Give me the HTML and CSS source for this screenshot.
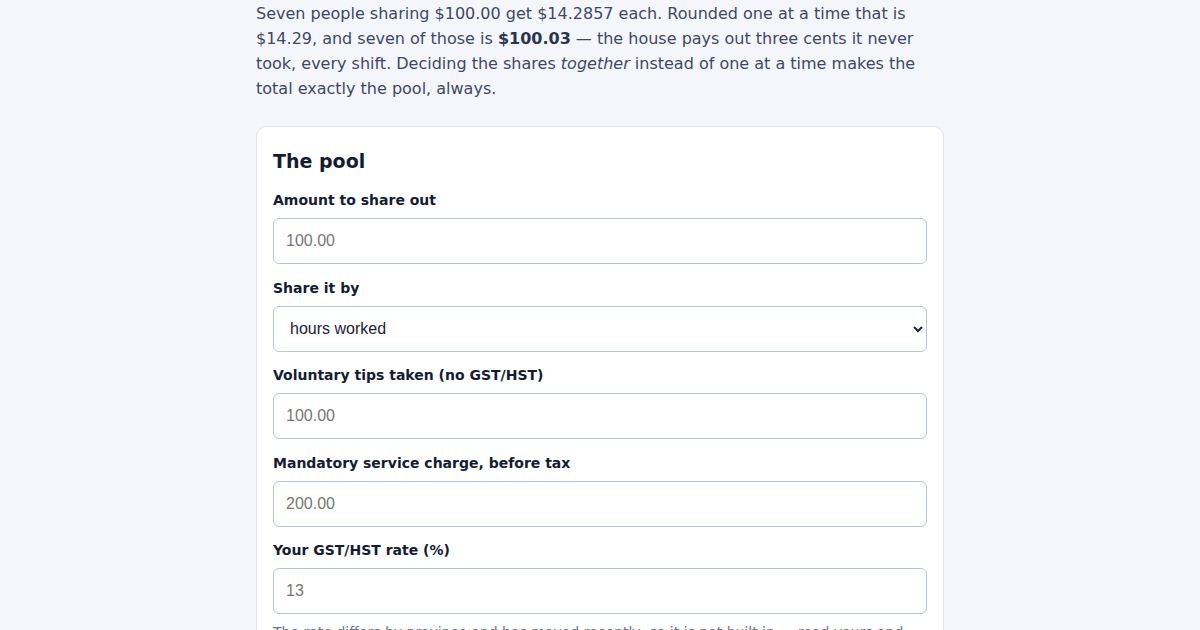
FILE: index.html
```html
<!DOCTYPE html>
<html lang="en">

<head>
    <meta charset="UTF-8" />
    <title>Tip pool</title>
    <link rel="stylesheet" href="styles.css">
</head>

<body>
    <div class="page">
        <p class="intro">Seven people sharing $100.00 get $14.2857 each. Rounded one at a time that is
            $14.29, and seven of those is <strong>$100.03</strong> — the house pays out three cents it never
            took, every shift. Deciding the shares <em>together</em> instead of one at a time makes the
            total exactly the pool, always.</p>

        <div class="card">
            <h2>The pool</h2>
            <div class="field">
                <label for="amount">Amount to share out</label>
                <input type="text" id="amount" placeholder="100.00" />
            </div>
            <div class="field">
                <label for="by">Share it by</label>
                <select id="by">
                    <option>hours worked</option>
                    <option>equal shares</option>
                    <option>points</option>
                </select>
            </div>
            <div class="field">
                <label for="tips">Voluntary tips taken (no GST/HST)</label>
                <input type="text" id="tips" placeholder="100.00" />
            </div>
            <div class="field">
                <label for="charge">Mandatory service charge, before tax</label>
                <input type="text" id="charge" placeholder="200.00" />
            </div>
            <div class="field">
                <label for="rate">Your GST/HST rate (%)</label>
                <input type="text" id="rate" placeholder="13" />
                <p class="hint">The rate differs by province and has moved recently, so it is not built in — read yours and enter it.</p>
            </div>
        </div>
    </div>
</body>

</html>
```

FILE: styles.css
```css
body {
    margin: 0;
    padding: 0;
    background-color: #f5f6fb;
    font-family: "DejaVu Sans", sans-serif;
    color: #3d4866;
}

.page {
    width: 688px;
    margin: 0 auto;
}

.intro {
    margin: 0 0 25px;
    padding-top: 1px;
    font-size: 16px;
    line-height: 25px;
}

.intro strong {
    color: #2a3452;
}

.card {
    background-color: #fff;
    border: 1px solid #e0e5f0;
    border-radius: 10px;
    padding: 20px 16px 16px;
}

.card h2 {
    margin: 0 0 15px;
    font-size: 19px;
    line-height: 28px;
    color: #141c33;
}

.field {
    margin-bottom: 13.5px;
}

.field label {
    display: block;
    margin-bottom: 8px;
    font-size: 14px;
    line-height: 20px;
    font-weight: bold;
    color: #141c33;
}

.field input,
.field select {
    display: block;
    width: 100%;
    height: 46px;
    box-sizing: border-box;
    padding: 0 12px;
    border: 1px solid #b9c3da;
    border-radius: 6px;
    background-color: #fff;
    font-family: "Liberation Sans", Arial, sans-serif;
    font-size: 16px;
    color: #1a2238;
    outline: none;
}

.field input::placeholder {
    color: #767676;
}

.hint {
    margin: 8px 0 0;
    font-size: 14px;
    line-height: 20px;
    color: #6b7390;
}
```
